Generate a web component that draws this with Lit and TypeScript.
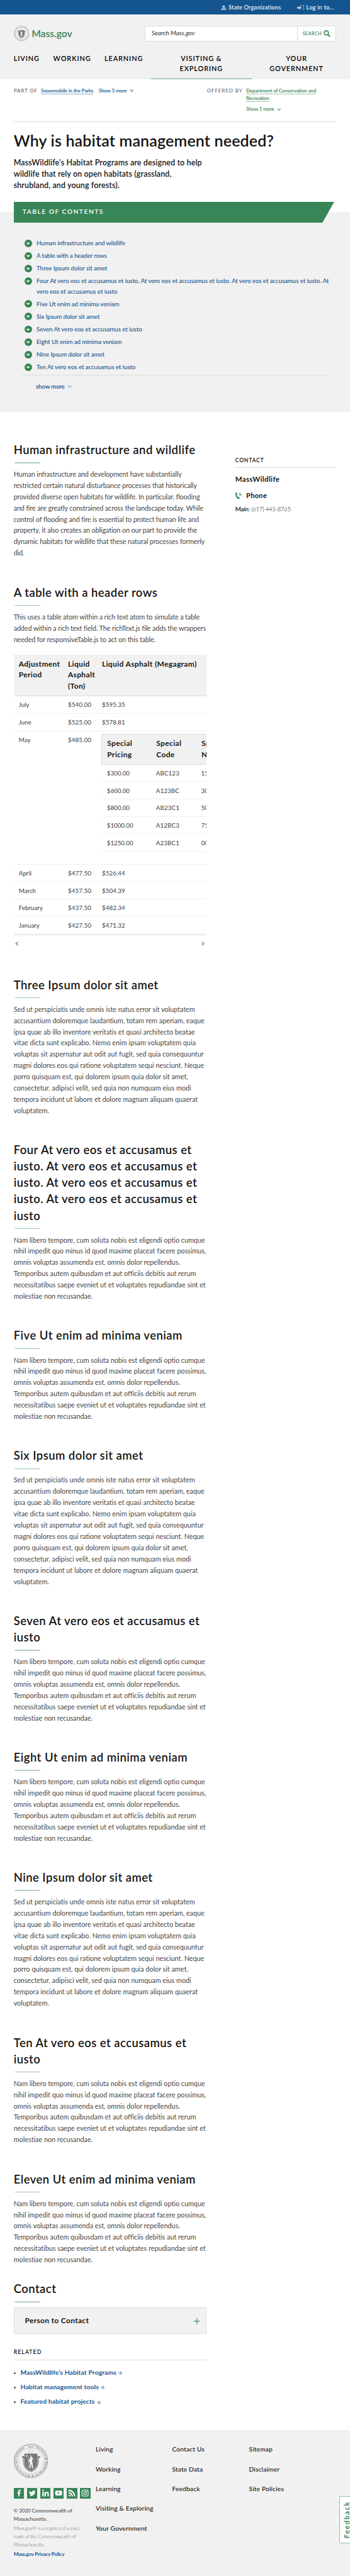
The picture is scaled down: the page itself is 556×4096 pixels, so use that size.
import { LitElement, html, css, svg } from "lit";
import { customElement } from "lit/decorators.js";

const SED = [
  "Sed ut perspiciatis unde omnis iste natus error sit voluptatem",
  "accusantium doloremque laudantium, totam rem aperiam, eaque",
  "ipsa quae ab illo inventore veritatis et quasi architecto beatae",
  "vitae dicta sunt explicabo. Nemo enim ipsam voluptatem quia",
  "voluptas sit aspernatur aut odit aut fugit, sed quia consequuntur",
  "magni dolores eos qui ratione voluptatem sequi nesciunt. Neque",
  "porro quisquam est, qui dolorem ipsum quia dolor sit amet,",
  "consectetur, adipisci velit, sed quia non numquam eius modi",
  "tempora incidunt ut labore et dolore magnam aliquam quaerat",
  "voluptatem.",
];
const NAM = [
  "Nam libero tempore, cum soluta nobis est eligendi optio cumque",
  "nihil impedit quo minus id quod maxime placeat facere possimus,",
  "omnis voluptas assumenda est, omnis dolor repellendus.",
  "Temporibus autem quibusdam et aut officiis debitis aut rerum",
  "necessitatibus saepe eveniet ut et voluptates repudiandae sint et",
  "molestiae non recusandae.",
];
const HUMAN = [
  "Human infrastructure and development have substantially",
  "restricted certain natural disturbance processes that historically",
  "provided diverse open habitats for wildlife. In particular, flooding",
  "and fire are greatly constrained across the landscape today. While",
  "control of flooding and fire is essential to protect human life and",
  "property, it also creates an obligation on our part to provide the",
  "dynamic habitats for wildlife that these natural processes formerly",
  "did.",
];
const TABLE_INTRO = [
  "This uses a table atom within a rich text atom to simulate a table",
  "added within a rich text field. The richText.js file adds the wrappers",
  "needed for responsiveTable.js to act on this table.",
];
const TOC = [
  ["Human infrastructure and wildlife"],
  ["A table with a header rows"],
  ["Three Ipsum dolor sit amet"],
  [
    "Four At vero eos et accusamus et iusto. At vero eos et accusamus et iusto. At vero eos et accusamus et iusto. At",
    "vero eos et accusamus et iusto",
  ],
  ["Five Ut enim ad minima veniam"],
  ["Six Ipsum dolor sit amet"],
  ["Seven At vero eos et accusamus et iusto"],
  ["Eight Ut enim ad minima veniam"],
  ["Nine Ipsum dolor sit amet"],
  ["Ten At vero eos et accusamus et iusto"],
];
const SECTIONS: [string[], string[]][] = [
  [["Three Ipsum dolor sit amet"], SED],
  [
    [
      "Four At vero eos et accusamus et",
      "iusto. At vero eos et accusamus et",
      "iusto. At vero eos et accusamus et",
      "iusto. At vero eos et accusamus et",
      "iusto",
    ],
    NAM,
  ],
  [["Five Ut enim ad minima veniam"], NAM],
  [["Six Ipsum dolor sit amet"], SED],
  [["Seven At vero eos et accusamus et", "iusto"], NAM],
  [["Eight Ut enim ad minima veniam"], NAM],
  [["Nine Ipsum dolor sit amet"], SED],
  [["Ten At vero eos et accusamus et", "iusto"], NAM],
  [["Eleven Ut enim ad minima veniam"], NAM],
];
const BEFORE = [
  ["July", "$540.00", "$595.35"],
  ["June", "$525.00", "$578.81"],
];
const AFTER = [
  ["April", "$477.50", "$526.44"],
  ["March", "$457.50", "$504.39"],
  ["February", "$437.50", "$482.34"],
  ["January", "$427.50", "$471.32"],
];
const NESTED = [
  ["$300.00", "ABC123", "15"],
  ["$600.00", "A123BC", "30"],
  ["$800.00", "AB23C1", "50"],
  ["$1000.00", "A12BC3", "75"],
  ["$1250.00", "A23BC1", "00"],
];

const lines = (l: string[]) => l.map((t) => html`<span class="ln">${t}</span>`);
const chevron = (cls: string) => html`<svg class=${cls} viewBox="0 0 12 9">
  <path d="M0 2.4 2.4 0 6 3.4 9.6 0 12 2.4 6 8.6z" fill="currentColor"/></svg>`;
const arrow = html`<svg class="arrow" viewBox="0 0 12 12">
  <path d="M0 4.7h6.3L3.9 2.2 6 .2 11.8 6 6 11.8 3.9 9.8 6.3 7.3H0z" fill="currentColor"/></svg>`;

@customElement("state-seal")
export class StateSeal extends LitElement {
  static styles = css`
    :host { display: block; }
    svg { display: block; width: 100%; height: 100%; }
    text { font: 600 8.4px "Liberation Serif", serif; fill: #777; }
  `;
  render() {
    return html`<svg viewBox="0 0 100 100" fill="none" stroke="#777">
      <circle cx="50" cy="50" r="49.3" stroke-width="1.2"/>
      <circle cx="50" cy="50" r="47" stroke-width=".6"/>
      <circle cx="50" cy="50" r="37.4" stroke-width="1" stroke-dasharray="1 .7"/>
      <defs><path id="ring" d="M63.8 11.7A40.7 40.7 0 1 1 36.2 11.7"/></defs>
      <text stroke="none" textLength="224"><textPath href="#ring" textLength="224">SIGILLUM  REIPUBLICÆ  MASSACHUSETTENSIS.</textPath></text>
      <path d="M40 8.5l6-1.8v3.6zM60 8.5l-6-1.8v3.6z" fill="#777" stroke="none"/>
      <circle cx="50" cy="8.5" r="2" stroke-width="1"/>
      <path d="M43 26.5h14M44 25l3-7 4-1 2 3 5 5" stroke="#999" stroke-width=".8"/>
      <path d="M25.5 37.5l4.500 1q-2.500 8-.5 19 3 15 16.500 21.500l4 1.500 4-1.500Q67.500 72.500 70.500 57.500q2-11-.5-19l5-1" stroke-width="3.200" stroke-dasharray="2.600 .5"/>
      <path d="M24 36h5.500v5H24zM70.500 36H77v5h-6.500z" fill="#777" stroke="none"/>
      <path d="M31 28.700h38V52q0 18-19 27Q31 70 31 52z" fill="#777" stroke="none"/>
      <path d="M37.500 31.500l1 2.600h2.700l-2.200 1.700.8 2.700-2.300-1.600-2.300 1.600.8-2.700-2.200-1.700h2.700zM48 33.500l2.600.3.4 4 3.200 1.700 3.300 7-1.300 1-3-3.500.3 6 1.500 8 1.600 13-3.600.3-1.500-11-1.600.1-1 11.200-3.600-.3 1.500-14-.5-8.500-1 5-1.700-.6 1-8 3.200-2.500z" fill="#f1f1f1" stroke="none"/>
      <path d="M42.300 37v33" stroke="#f1f1f1" stroke-width="1"/>
    </svg>`;
  }
}

const SOCIAL = [
  svg`<path d="M16.700 25v-8.800h3l.4-3.400h-3.400v-2.100c0-1 .3-1.700 1.700-1.700H20V5.200C19.700 5.100 18.600 5 17.400 5c-2.600 0-4.400 1.600-4.400 4.500v3.300h-3v3.400h3V25z"/>`,
  svg`<path d="M25 9.300a8 8 0 0 1-2.200.6 3.900 3.900 0 0 0 1.700-2.200 8 8 0 0 1-2.500 1 4 4 0 0 0-6.800 3.600 11.300 11.300 0 0 1-8.200-4.200 4 4 0 0 0 1.200 5.300 4 4 0 0 1-1.800-.5c0 2 1.300 3.600 3.200 4a4 4 0 0 1-1.800.1 4 4 0 0 0 3.700 2.700 8 8 0 0 1-5.900 1.700 11.300 11.300 0 0 0 17.400-10A8 8 0 0 0 25 9.300z"/>`,
  svg`<path d="M6 12h4v13H6zM8 5.300a2.300 2.300 0 1 1 0 4.700 2.300 2.300 0 0 1 0-4.700zM12.400 12h3.900v1.800c.6-1 1.900-2.100 3.900-2.100 4.100 0 4.800 2.700 4.800 6.200V25h-4v-6.300c0-1.500 0-3.400-2.100-3.400s-2.400 1.600-2.400 3.300V25h-4.100z"/>`,
  svg`<path fill-rule="evenodd" d="M8.500 8Q15 7.400 21.500 8 25 8.200 25 12v6q0 3.800-3.500 4-6.500.7-13 0Q5 21.800 5 18v-6q0-3.800 3.500-4zM12.500 11.500v6.500l6-3.200z"/>`,
  svg`<path d="M7.600 19.700a2.700 2.700 0 1 1 0 5.300 2.700 2.700 0 0 1 0-5.300zM5 11.800v3.800c5.200 0 9.300 4.200 9.300 9.400H18c0-7.300-5.800-13.200-13-13.200zM5 5v3.800c9 0 16.100 7.200 16.100 16.200H25C25 14 16 5 5 5z"/>`,
  svg`<path fill-rule="evenodd" d="M10.500 5h9Q25 5 25 10.500v9q0 5.500-5.500 5.500h-9Q5 25 5 19.500v-9Q5 5 10.500 5zm.2 1.900q-3.800 0-3.800 3.800v8.600q0 3.800 3.800 3.800h8.600q3.800 0 3.800-3.800v-8.600q0-3.800-3.800-3.800zM15 9.900a5.100 5.100 0 1 1 0 10.200 5.100 5.100 0 0 1 0-10.200zm0 1.900a3.200 3.200 0 1 0 0 6.400 3.200 3.200 0 0 0 0-6.400z"/><circle cx="20.300" cy="9.700" r="1.200"/>`,
];

@customElement("app-root")
export class AppRoot extends LitElement {
  static styles = css`
    :host {
      display: block; position: relative; overflow: hidden; box-sizing: border-box;
      width: 1025px; height: 7551px; zoom: 0.5425;
      background: #fff; color: #141414;
      font-family: Lato, "Open Sans", sans-serif; font-size: 20px; line-height: 33px;
      white-space: nowrap;
    }
    * { box-sizing: border-box; }
    h1, h2, h3, p, ul { margin: 0; padding: 0; }
    ul { list-style: none; }
    .ln { display: block; }
    svg { display: block; flex: none; }

    .topbar {
      height: 43px; background: #14558f; color: #fff; display: flex; align-items: center;
      justify-content: flex-end; gap: 48px; padding: 1px 47px 0 0;
      font-size: 17px; font-weight: 500; letter-spacing: 0.38px;
    }
    .topbar div { display: flex; align-items: center; }
    .topbar svg { color: #bccfe1; }
    .dome { width: 16px; height: 16px; margin-right: 6.500px; }
    .login { width: 20px; height: 16px; margin-right: 6px; }

    .header { height: 190px; background: #f1f1f1; padding: 33px 0 0 40px; display: flex; flex-direction: column; }
    .brand-row { display: flex; justify-content: space-between; align-items: center; height: 46px; width: 944px; }
    .brand { display: flex; align-items: center; color: #388557; font-size: 29px; font-weight: 600; letter-spacing: -0.1px; }
    .brand state-seal { width: 45px; height: 45px; margin-right: 7.500px; }
    .brand span { margin-top: -3px; }
    .search { display: flex; width: 560px; height: 46px; border: 2px solid #dcdcdc; background: #fff; }
    .search .field { flex: 1; padding-left: 18px; font-size: 19px; font-style: italic; letter-spacing: -0.300px; line-height: 40px; color: #333; }
    .search .go {
      width: 112px; border-left: 2px solid #dcdcdc; color: #388557; display: flex; align-items: center;
      padding: 0 0 0 14px; gap: 5px; font-size: 13px; font-weight: 600; letter-spacing: 1.050px;
    }
    .search svg { width: 20px; height: 20px; }
    .nav {
      margin: 34px 0 0; height: 77px; display: grid; grid-template-columns: 116px 150px 135px 297px 261px;
      font-size: 20px; line-height: 31px; font-weight: 600; letter-spacing: 1.700px; color: #000;
    }
    .nav .wide { text-align: center; display: flex; flex-direction: column; justify-content: space-between; }
    .nav .mark { height: 3.500px; background: #93bfa3; clip-path: polygon(2px 0, 100% 0, 295px 100%, 0 100%); }

    .crumbs {
      height: 124px; margin: 0 41px 0 40px; padding-top: 23px; border-bottom: 2px solid #dcdcdc;
      display: grid; grid-template-columns: 80px 486px 115px auto; font-size: 15px; line-height: 22px;
    }
    .crumbs .label { color: #535353; letter-spacing: 1.500px; }
    .crumbs .val { font-weight: 600; letter-spacing: -0.430px; color: #14558f; }
    .crumbs .row { display: flex; align-items: flex-start; }
    .crumbs u { text-decoration: underline; text-decoration-color: #8aabcb; text-underline-offset: 3px; text-decoration-thickness: 1.500px; }
    .crumbs .more { display: flex; align-items: center; gap: 8px; }
    .crumbs .row .more { margin-left: 16px; }
    .crumbs .green { color: #388557; }
    .crumbs .green u { text-decoration-color: #9bc2ab; }
    .crumbs .green .more { margin-top: 10px; }
    .crumbs .chev { width: 12px; height: 9px; color: #8aabcb; }
    .crumbs .green .chev { color: #9bc2ab; }

    h1 { margin: 26px 0 0 40px; font-size: 46px; line-height: 56px; font-weight: 600; letter-spacing: 0.350px; }
    .lead { margin: 22px 0 31px 40px; font-size: 23px; line-height: 33px; font-weight: 600; letter-spacing: 0.230px; }

    .toc { height: 616px; background: linear-gradient(#fff 30px, #f1f1f1 30px); padding-left: 40px; }
    .toc-head {
      width: 939px; height: 62px; padding: 0 26px; background: #388557; color: #fff; display: flex; align-items: center;
      clip-path: polygon(0 0, 100% 0, 904px 100%, 0 100%); font-size: 19px; font-weight: 600; letter-spacing: 2.730px;
    }
    .toc ul { margin: 44px 0 8px 32px; display: flex; flex-direction: column; gap: 7px; }
    .toc li { display: flex; gap: 13px; font-size: 18px; line-height: 30px; font-weight: 500; letter-spacing: -0.170px; color: #14558f; }
    .dot { width: 22px; height: 22px; margin-top: 5px; border-radius: 50%; background: #388557; color: #fff; display: flex; align-items: center; justify-content: center; }
    .dot svg { width: 10px; height: 8px; margin-top: 1px; }
    .toc .rule { width: 896px; height: 2px; margin-left: 24px; background: #dcdcdc; }
    .toc .more { margin: 18px 0 0 65px; display: flex; align-items: center; gap: 8px; font-size: 18px; line-height: 30px; font-weight: 600; letter-spacing: -0.310px; color: #14558f; }
    .toc .more svg { width: 14px; height: 11px; color: #b0c5da; }

    .body { height: 5916px; display: grid; grid-template-columns: 564px 295px; column-gap: 85px; padding-left: 40px; }
    .main { padding-top: 87px; min-width: 0; }
    h2 { font-size: 34px; line-height: 48px; font-weight: 600; letter-spacing: 0.870px; }
    .bar { width: 75px; height: 3px; margin: 13px 0 15.300px 3px; background: #9bc2ab; clip-path: polygon(1.500px 0, 100% 0, 73.500px 100%, 0 100%); }
    .text { color: #484848; letter-spacing: -0.040px; }
    .text.tight { letter-spacing: -0.260px; }
    .section { margin-bottom: 74.700px; }
    .section.last { margin-bottom: 44.700px; }

    .table { height: 972px; padding-top: 29px; }
    .scroll { overflow: hidden; height: 821.500px; border-bottom: 2px solid #dcdcdc; }
    .tr { display: grid; grid-template-columns: 144px 99.500px 360px; height: 51px; border-bottom: 1px solid #f1f1f1; padding-top: 9.500px; font-size: 18px; line-height: 30px; color: #3c3c3c; letter-spacing: 0; }
    .tr > * { padding-left: 15px; }
    .tr.head { height: 122px; padding-top: 10px; background: #f1f1f1; border-bottom: 3px solid #dcdcdc; font-size: 22px; line-height: 33px; font-weight: 700; letter-spacing: 0.700px; color: #141414; }
    .num { letter-spacing: 0.200px; }
    .tr.tall { height: 391px; }
    .tr .nest { margin-top: -1.500px; padding-left: 12.500px; }
    .nest .tr { grid-template-columns: 144px 132px 100px; width: 380px; margin-left: 2px; }
    .nest .tr.head { height: 90px; width: 382px; margin-left: 0; grid-template-columns: 144px 132px 106px; border: 3px solid #dcdcdc; padding-left: 1px; }
    .pager { display: flex; justify-content: space-between; padding: 18px 4px 0 5px; color: #8aabcb; }
    .pager svg { width: 10px; height: 13px; }

    .side { padding-top: 132.500px; }
    .cap { font-size: 16px; line-height: 20px; font-weight: 600; letter-spacing: 1.370px; }
    .line { height: 2px; background: #dcdcdc; margin-top: 10.500px; }
    .org { margin-top: 17.600px; font-size: 21px; line-height: 28px; font-weight: 700; letter-spacing: 0.750px; }
    .phone { margin-top: 20.600px; display: flex; align-items: center; font-size: 20px; line-height: 28px; font-weight: 700; letter-spacing: 0.750px; }
    .phone svg { width: 19px; height: 20px; margin: 1px 12px 0 1px; }
    .tel { margin-top: 12px; font-size: 18px; line-height: 28px; font-weight: 600; letter-spacing: -0.300px; }
    .tel span { font-weight: 300; letter-spacing: -0.700px; }

    .acc { height: 77px; border: 2px solid #dcdcdc; background: #f1f1f1; display: flex; align-items: center; justify-content: space-between; padding: 0 17px 2px 31px; font-size: 22px; font-weight: 700; letter-spacing: 0.660px; }
    .acc svg { width: 18px; height: 18px; margin-top: 4px; }
    .rel { margin-top: 44.500px; letter-spacing: 2px; }
    .links { margin-top: 20px; display: flex; flex-direction: column; gap: 10px; font-size: 19px; font-weight: 700; letter-spacing: 0.230px; color: #14558f; }
    .links li { display: flex; align-items: center; }
    .links i { width: 6px; height: 6px; border-radius: 50%; background: #535353; margin: 2px 13px 0 1px; }
    .arrow { width: 12px; height: 12px; margin: 2px 0 0 6px; color: #8aabcb; }

    .footer { height: 428px; background: #f1f1f1; display: grid; grid-template-columns: 240px 224px 225px 200px; padding: 40px 0 0 40px; }
    .footer state-seal { width: 100px; height: 100px; }
    .social { display: flex; gap: 9px; margin: 30px 0 24px; }
    .social svg { width: 30px; height: 30px; background: #388557; fill: #fff; }
    .copy { font-size: 15px; line-height: 24px; }
    .c1 { font-weight: 500; color: #4c4c4c; letter-spacing: -0.230px; }
    .c2 { margin: 4px 0; color: #6b6b6b; font-weight: 300; letter-spacing: -0.580px; }
    .c3 { font-weight: 700; color: #14558f; letter-spacing: -0.410px; }
    .col { display: flex; flex-direction: column; gap: 27.800px; padding-top: 1px; font-size: 19px; line-height: 30px; font-weight: 500; letter-spacing: 0.230px; }
    .feedback {
      position: absolute; left: 994px; top: 7317px; width: 40px; height: 137px; border: 3px solid #93bfa3; border-radius: 4px;
      background: #fff; color: #388557; display: flex; align-items: center; padding-left: 8px;
    }
    .feedback span { writing-mode: vertical-rl; transform: rotate(180deg); font-size: 20px; line-height: 22px; font-weight: 700; letter-spacing: 3px; margin: 0 0 2px; }
  `;

  private row(r: string[]) {
    return html`<div class="tr"><span>${r[0]}</span><span class="num">${r[1]}</span><span class="num">${r[2]}</span></div>`;
  }

  render() {
    return html`
      <div class="topbar">
        <div><svg class="dome" viewBox="0 0 16 16" fill="currentColor"><path d="M7.500 0h1v1.500Q11.500 2.500 12 5.500v.8H4v-.8q.5-3 3.500-4zM3 7h10v1H3zM3 8.500h1.800v2.300h1.400V8.500h1.300v2.300h1.300V8.500h1.200v2.300h1.300V8.500H13v3h3v1.200H0v-1.200h3zM0 13h1.500v1.500h2V13h1.700v1.500h2V13h1.700v1.500h2V13h1.700v1.500h2V13H16v3H0z"/></svg>State Organizations</div>
        <div><svg class="login" viewBox="0 0 20 16"><path d="M0 5.500h7V2.300L13.300 8 7 13.700v-3.200H0z" fill="currentColor"/><path d="M8.500.7h10.800v14.600H8.500" fill="none" stroke="currentColor" stroke-width="1.400"/></svg>Log in to...</div>
      </div>
      <div class="header">
        <div class="brand-row">
          <div class="brand"><state-seal></state-seal><span>Mass.gov</span></div>
          <div class="search"><div class="field">Search Mass.gov</div>
            <div class="go">SEARCH<svg viewBox="0 0 20 20" fill="none" stroke="#388557"><circle cx="8" cy="8" r="6.300" stroke-width="3"/><path d="M12.500 12.500l6 6" stroke-width="3.600"/></svg></div></div>
        </div>
        <div class="nav">
          <span>LIVING</span><span>WORKING</span><span>LEARNING</span>
          <div class="wide"><div>VISITING &amp;<br>EXPLORING</div><div class="mark"></div></div>
          <div class="wide"><div>YOUR<br>GOVERNMENT</div></div>
        </div>
      </div>
      <div class="crumbs">
        <span class="label">PART OF</span>
        <div class="val row"><u>Snowmobile in the Parks</u><span class="more">Show 5 more ${chevron("chev")}</span></div>
        <span class="label">OFFERED BY</span>
        <div class="val green"><u>Department of Conservation and<br>Recreation</u><div class="more">Show 1 more ${chevron("chev")}</div></div>
      </div>
      <h1>Why is habitat management needed?</h1>
      <p class="lead">${lines(["MassWildlife's Habitat Programs are designed to help", "wildlife that rely on open habitats (grassland,", "shrubland, and young forests)."])}</p>
      <div class="toc">
        <div class="toc-head">TABLE OF CONTENTS</div>
        <ul>${TOC.map((t) => html`<li><span class="dot">${chevron("")}</span><div>${lines(t)}</div></li>`)}</ul>
        <div class="rule"></div>
        <div class="more">show more ${chevron("")}</div>
      </div>
      <div class="body">
        <div class="main">
          <div class="section"><h2>Human infrastructure and wildlife</h2><div class="bar"></div><p class="text tight">${lines(HUMAN)}</p></div>
          <h2>A table with a header rows</h2><div class="bar"></div><p class="text tight">${lines(TABLE_INTRO)}</p>
          <div class="table">
            <div class="scroll">
              <div class="tr head"><span>Adjustment<br>Period</span><span>Liquid<br>Asphalt<br>(Ton)</span><span>Liquid Asphalt (Megagram)</span></div>
              ${BEFORE.map((r) => this.row(r))}
              <div class="tr tall"><span>May</span><span class="num">$485.00</span>
                <div class="nest">
                  <div class="tr head"><span>Special<br>Pricing</span><span>Special<br>Code</span><span>Special<br>Number</span></div>
                  ${NESTED.map((r) => this.row(r))}
                </div>
              </div>
              ${AFTER.map((r) => this.row(r))}
            </div>
            <div class="pager">
              <svg viewBox="0 0 10 13"><path d="M7 0 10 2.800 5.500 6.500 10 10.200 7 13 0 6.500z" fill="currentColor"/></svg>
              <svg viewBox="0 0 10 13"><path d="M3 0 0 2.800 4.500 6.500 0 10.200 3 13 10 6.500z" fill="currentColor"/></svg>
            </div>
          </div>
          ${SECTIONS.map(([h, p], i) => html`<div class="section ${i === SECTIONS.length - 1 ? "last" : ""}"><h2>${lines(h)}</h2><div class="bar"></div><p class="text">${lines(p)}</p></div>`)}
          <h2>Contact</h2><div class="bar"></div>
          <div class="acc">Person to Contact<svg viewBox="0 0 18 18"><path d="M9 0v18M0 9h18" stroke="#388557" stroke-width="2"/></svg></div>
          <h3 class="cap rel">RELATED</h3><div class="line"></div>
          <ul class="links">${["MassWildlife's Habitat Programs", "Habitat management tools", "Featured habitat projects"].map((t) => html`<li><i></i>${t}${arrow}</li>`)}</ul>
        </div>
        <div class="side">
          <h3 class="cap">CONTACT</h3><div class="line"></div>
          <div class="org">MassWildlife</div>
          <div class="phone"><svg viewBox="0 0 19 20"><path d="M3.800 0 5.500 4.800 4 6.500q0 4 4 7.500l2.200-.8L13.300 17l-1.800 2.700Q8 21 4 16-1 9 .3 2 1.500 0 3.800 0z" fill="#388557"/><path d="M10.500 6.500q2 .5 2 2.500M11 4q4 .8 4 5M11.500 1.500q6 1 6 8" fill="none" stroke="#388557" stroke-width="1.500"/></svg>Phone</div>
          <div class="tel">Main<span>: (617) 443-8765</span></div>
        </div>
      </div>
      <div class="footer">
        <div>
          <state-seal></state-seal>
          <div class="social">${SOCIAL.map((p) => html`<svg viewBox="0 0 30 30">${p}</svg>`)}</div>
          <div class="copy"><p class="c1">© 2020 Commonwealth of<br>Massachusetts.</p><p class="c2">Mass.gov® is a registered service<br>mark of the Commonwealth of<br>Massachusetts.</p><p class="c3">Mass.gov Privacy Policy</p></div>
        </div>
        <div class="col"><span>Living</span><span>Working</span><span>Learning</span><span>Visiting &amp; Exploring</span><span>Your Government</span></div>
        <div class="col"><span>Contact Us</span><span>State Data</span><span>Feedback</span></div>
        <div class="col"><span>Sitemap</span><span>Disclaimer</span><span>Site Policies</span></div>
      </div>
      <div class="feedback"><span>Feedback</span></div>
    `;
  }
}
